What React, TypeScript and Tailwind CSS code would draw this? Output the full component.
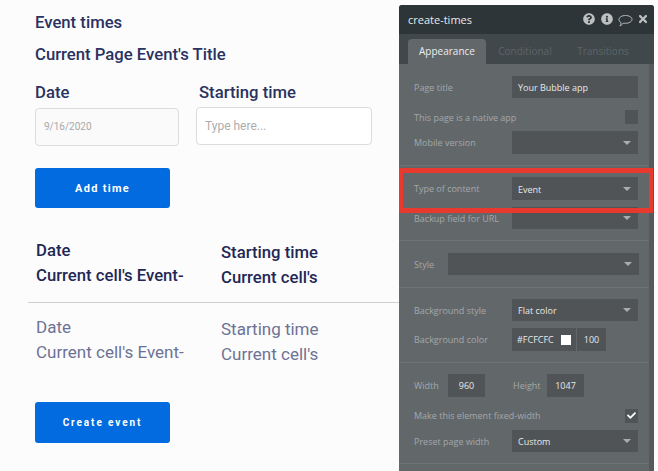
import { FaCheck, FaInfoCircle, FaQuestionCircle, FaTimes } from "react-icons/fa"

function Caret() {
  return (
    <svg width="8" height="4" viewBox="0 0 8 4" className="absolute right-[7px] top-1/2 -translate-y-1/2">
      <path d="M0 0h8L4 4z" fill="#a9adaf" />
    </svg>
  )
}

function Field({ text, w, select }: { text?: string; w: string; select?: boolean }) {
  return (
    <div className={`relative flex h-full items-center bg-[#505457] pl-[6px] pt-[2px] text-[#e6e8e9] ${w}`}>
      {text}
      {select && <Caret />}
    </div>
  )
}

function Row({ label, mt, h, children }: { label: string; mt: string; h: string; children: React.ReactNode }) {
  return (
    <div className={`flex items-center justify-between ${mt} ${h}`}>
      <span className="whitespace-nowrap pt-px text-[#a3a7aa]">{label}</span>
      {children}
    </div>
  )
}

function Check({ on }: { on?: boolean }) {
  return (
    <div className="flex h-[14px] w-[13px] items-center justify-center bg-[#505457]">
      {on && <FaCheck className="text-[9px] text-white" />}
    </div>
  )
}

function Divider({ mt }: { mt: string }) {
  return <div className={`-ml-[15px] -mr-[11px] h-px bg-[#6e7376] ${mt}`} />
}

function Bubble() {
  return (
    <svg width="15" height="13" viewBox="0 0 15 13" fill="none" stroke="#c4c7c8" strokeWidth="0.9">
      <path d="M7.5 1.5c3.6 0 6.5 1.7 6.5 3.9S11.100 9.300 7.500 9.300c-.8 0-1.500-.1-2.200-.2C4.500 10.300 3.200 11.500 1.900 11.800c.8-.9 1.200-2 1.200-3.100C1.800 8 1 6.800 1 5.400 1 3.200 3.900 1.500 7.500 1.500z" />
    </svg>
  )
}

function Panel() {
  return (
    <aside className="relative mt-[5px] flex h-[466px] w-[255px] shrink-0 flex-col overflow-hidden rounded-t-[3px] bg-[#62676a] font-['Open_Sans',sans-serif] text-[9px]">
      <header className="flex h-[29px] shrink-0 items-center justify-between bg-[#2d3538] pb-[1px] pl-[9px] pr-[5px] text-[11px] text-[#e8eaea]">
        <span className="mt-[2px]">create-times</span>
        <div className="flex items-center text-[12px] text-[#bcc0c1]">
          <FaQuestionCircle />
          <FaInfoCircle className="ml-[6px]" />
          <span className="ml-[5px] mt-[2px]"><Bubble /></span>
          <FaTimes className="ml-[4px]" />
        </div>
      </header>
      <nav className="flex h-[30px] shrink-0 items-end bg-[#41484b] pl-[9px] text-[10px]">
        <div className="flex h-[25px] w-[78px] items-center justify-center rounded-t-[4px] bg-[#62676a] text-[#eceeee]">Appearance</div>
        <div className="flex h-[25px] w-[78px] items-center justify-center text-[#5d6468]">Conditional</div>
        <div className="flex h-[25px] w-[78px] items-center justify-center text-[#5d6468]">Transitions</div>
      </nav>
      <div className="flex min-h-0 flex-1">
        <div className="w-[250px] shrink-0 pl-[15px] pr-[11px]">
          <Row label="Page title" mt="mt-[12px]" h="h-[22px]">
            <Field text="Your Bubble app" w="w-[126px]" />
          </Row>
          <Row label="This page is a native app" mt="mt-[12px]" h="h-[14px]">
            <Check />
          </Row>
          <Row label="Mobile version" mt="mt-[7px]" h="h-[23px]">
            <Field w="w-[126px]" select />
          </Row>
          <Divider mt="mt-[11px]" />
          <Row label="Type of content" mt="mt-[11px]" h="h-[23px]">
            <Field text="Event" w="w-[126px]" select />
          </Row>
          <Row label="Backup field for URL" mt="mt-[7px]" h="h-[22px]">
            <Field w="w-[126px]" select />
          </Row>
          <Divider mt="mt-[11px]" />
          <Row label="Style" mt="mt-[12px]" h="h-[22px]">
            <Field w="w-[191px] -mr-px" select />
          </Row>
          <Divider mt="mt-[12px]" />
          <Row label="Background style" mt="mt-[11px]" h="h-[22px]">
            <Field text="Flat color" w="w-[126px]" select />
          </Row>
          <Row label="Background color" mt="mt-[7px]" h="h-[23px]">
            <div className="flex h-full w-[126px] gap-px text-[#e6e8e9]">
              <div className="flex w-[64px] items-center justify-between bg-[#505457] pl-[5px] pr-[5px]">
                #FCFCFC
                <span className="h-[10px] w-[10px] bg-white" />
              </div>
              <div className="flex w-[29px] items-center justify-center bg-[#505457]">100</div>
            </div>
          </Row>
          <Divider mt="mt-[11px]" />
          <div className="mt-[11px] flex h-[23px] items-center text-[#a3a7aa]">
            <span className="w-[34px]">Width</span>
            <div className="flex h-full w-[37px] items-center justify-center bg-[#505457] text-[#e6e8e9]">960</div>
            <span className="ml-[28px] w-[34px]">Height</span>
            <div className="flex h-full w-[37px] items-center justify-center bg-[#505457] text-[#e6e8e9]">1047</div>
          </div>
          <Row label="Make this element fixed-width" mt="mt-[12px]" h="h-[13px]">
            <Check on />
          </Row>
          <Row label="Preset page width" mt="mt-[8px]" h="h-[22px]">
            <Field text="Custom" w="w-[126px]" select />
          </Row>
          <Divider mt="mt-[11px]" />
        </div>
        <div className="w-[5px] bg-[#55595c]" />
      </div>
      <div className="absolute left-0 top-[163px] h-[45px] w-[254px] border-x-4 border-y-[5px] border-[#e8392e]" />
    </aside>
  )
}

function Left() {
  return (
    <main className="w-[399px] shrink-0 font-['Roboto',sans-serif] text-[16.7px] font-medium leading-5 text-[#2a3260]">
      <div className="ml-[35px] mt-[13px]">Event times</div>
      <div className="ml-[35px] mt-[12px]">Current Page Event's Title</div>
      <div className="ml-[35px] mt-[18px] flex">
        <div className="flex w-[161px] flex-col">
          <span>Date</span>
          <div className="mt-[5px] flex h-[38px] w-[144px] items-center rounded-[4px] border border-[#dcdcdc] bg-[#fafafa] pl-[8px] text-[10px] font-normal text-[#a9a9a9]">9/16/2020</div>
        </div>
        <div className="ml-[3px] flex flex-col">
          <span>Starting time</span>
          <div className="-ml-[3px] mt-[4px] flex h-[38px] w-[176px] items-center rounded-[4px] border border-[#dcdcdc] bg-white pl-[8px] text-[12px] font-normal text-[#adadad]">Type here...</div>
        </div>
      </div>
      <button className="ml-[35px] mt-[22px] block h-[40px] w-[135px] rounded-[3px] bg-[#026bdf] pt-px text-[11px] font-bold tracking-[1.3px] text-white">Add time</button>
      <div className="ml-[36px] mt-[33px] flex h-[47px] text-[#1f2855]">
        <div className="w-[185px]">
          <div>Date</div>
          <div className="mt-[5px]">Current cell's Event-</div>
        </div>
        <div className="mt-[2px]">
          <div>Starting time</div>
          <div className="mt-[5px]">Current cell's</div>
        </div>
      </div>
      <div className="ml-[28px] mt-[14px] h-px bg-[#cfcfcf]" />
      <div className="ml-[36px] mt-[14px] flex h-[48px] text-[17px] font-normal text-[#6d7295]">
        <div className="w-[185px]">
          <div>Date</div>
          <div className="mt-[5px]">Current cell's Event-</div>
        </div>
        <div className="mt-[2px]">
          <div>Starting time</div>
          <div className="mt-[5px]">Current cell's</div>
        </div>
      </div>
      <button className="ml-[35px] mt-[37px] block h-[41px] w-[135px] rounded-[3px] bg-[#026bdf] text-[10px] font-bold tracking-[1.9px] text-white">Create event</button>
    </main>
  )
}

export default function App() {
  return (
    <div className="flex h-[471px] w-[658px] overflow-hidden bg-[#fcfcfd]">
      <Left />
      <Panel />
    </div>
  )
}
